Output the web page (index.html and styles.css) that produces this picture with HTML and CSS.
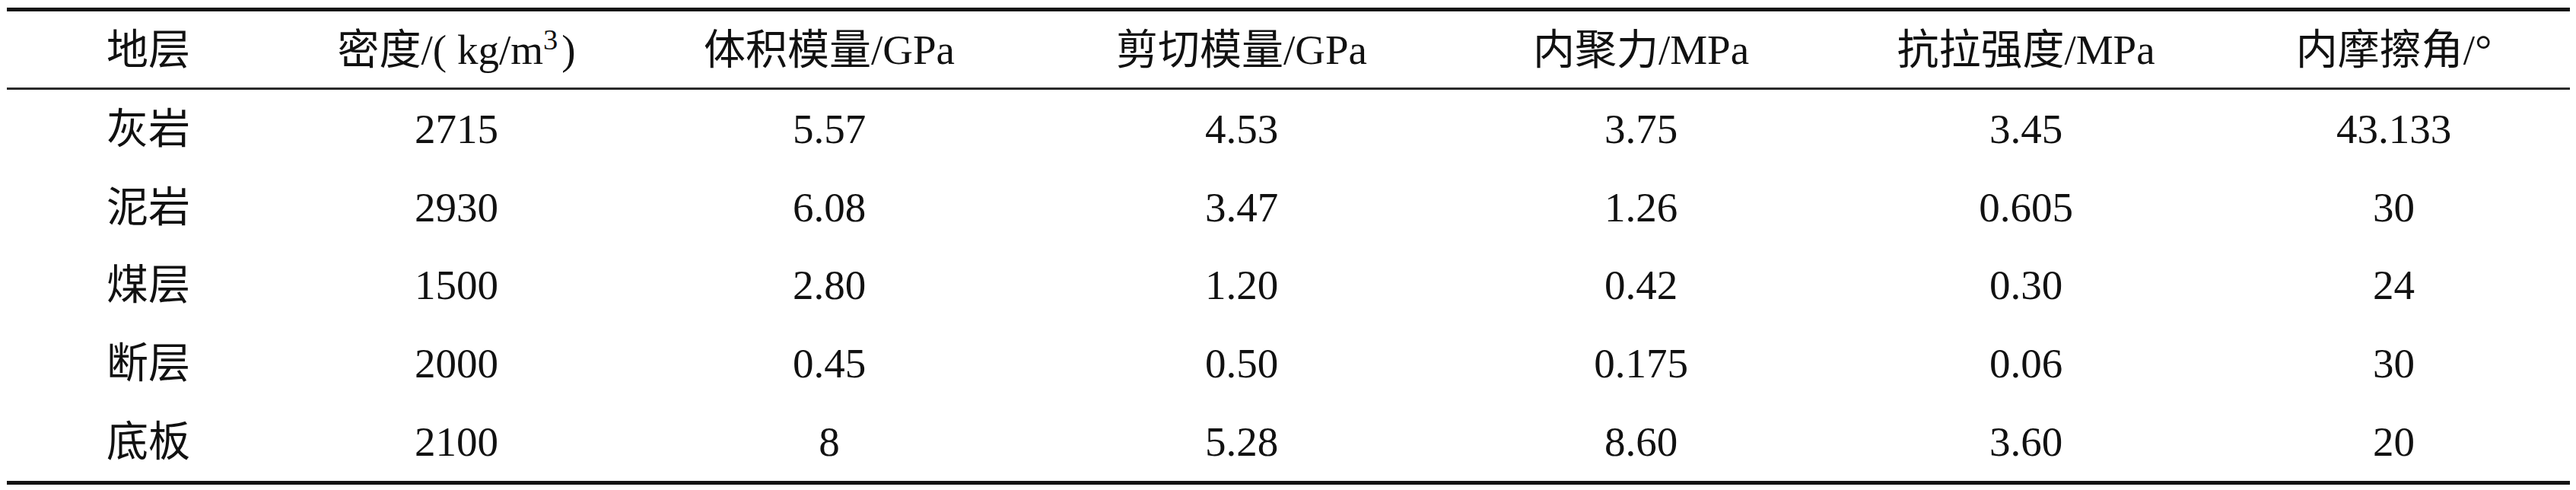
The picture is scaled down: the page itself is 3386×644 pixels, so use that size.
FILE: index.html
```html
<!DOCTYPE html>
<html lang="zh-CN">
<head>
<meta charset="utf-8">
<title>岩层参数表</title>
<link rel="stylesheet" href="styles.css">
</head>
<body>
<div class="table">
  <div class="row head">
    <div class="cell">地层</div>
    <div class="cell">密度/<span class="po">(</span>kg/m<sup class="sup">3</sup><span class="pc">)</span></div>
    <div class="cell">体积模量/GPa</div>
    <div class="cell">剪切模量/GPa</div>
    <div class="cell">内聚力/MPa</div>
    <div class="cell">抗拉强度/MPa</div>
    <div class="cell">内摩擦角/°</div>
  </div>
  <div class="row">
    <div class="cell">灰岩</div>
    <div class="cell">2715</div>
    <div class="cell">5.57</div>
    <div class="cell">4.53</div>
    <div class="cell">3.75</div>
    <div class="cell">3.45</div>
    <div class="cell">43.133</div>
  </div>
  <div class="row">
    <div class="cell">泥岩</div>
    <div class="cell">2930</div>
    <div class="cell">6.08</div>
    <div class="cell">3.47</div>
    <div class="cell">1.26</div>
    <div class="cell">0.605</div>
    <div class="cell">30</div>
  </div>
  <div class="row">
    <div class="cell">煤层</div>
    <div class="cell">1500</div>
    <div class="cell">2.80</div>
    <div class="cell">1.20</div>
    <div class="cell">0.42</div>
    <div class="cell">0.30</div>
    <div class="cell">24</div>
  </div>
  <div class="row">
    <div class="cell">断层</div>
    <div class="cell">2000</div>
    <div class="cell">0.45</div>
    <div class="cell">0.50</div>
    <div class="cell">0.175</div>
    <div class="cell">0.06</div>
    <div class="cell">30</div>
  </div>
  <div class="row">
    <div class="cell">底板</div>
    <div class="cell">2100</div>
    <div class="cell">8</div>
    <div class="cell">5.28</div>
    <div class="cell">8.60</div>
    <div class="cell">3.60</div>
    <div class="cell">20</div>
  </div>
</div>
</body>
</html>
```
FILE: styles.css
```css
html, body {
  margin: 0;
  padding: 0;
  background: #ffffff;
}
body {
  padding: 10px 8px 0 9px;
  font-family: "Liberation Serif", "Noto Sans CJK SC", serif;
  color: #111111;
}
.table {
  width: 3369px;
  border-top: 5px solid #141414;
  border-bottom: 5px solid #141414;
}
.row {
  display: grid;
  grid-template-columns: 372px 438px 542px 542px 508px 504px 463px;
  align-items: center;
  height: 102.8px;
}
.head {
  height: 100px;
  border-bottom: 3px solid #2a2a2a;
}
.cell {
  text-align: center;
  font-size: 55px;
  line-height: 1;
  white-space: nowrap;
}
.po {
  margin-right: 14px;
}
.pc {
  margin-left: 5px;
}
.sup {
  font-size: 0.7em;
  vertical-align: 0.5em;
  line-height: 0;
}
```
